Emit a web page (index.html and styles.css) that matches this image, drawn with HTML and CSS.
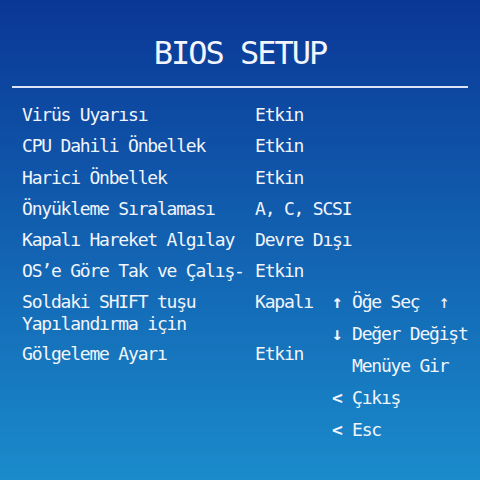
FILE: index.html
```html
<!DOCTYPE html>
<html lang="tr">
<head>
  <meta charset="UTF-8">
  <title>BIOS SETUP</title>
  <meta name="viewport" content="width=device-width, initial-scale=1.0">
  <link rel="stylesheet" href="styles.css">
</head>
<body>
  <div class="screen">
    <h1 class="title">BIOS SETUP</h1>
    <hr class="rule">

    <div class="options">
      <div class="label">Virüs Uyarısı</div><div class="value">Etkin</div>
      <div class="label">CPU Dahili Önbellek</div><div class="value">Etkin</div>
      <div class="label">Harici Önbellek</div><div class="value">Etkin</div>
      <div class="label">Önyükleme Sıralaması</div><div class="value">A, C, SCSI</div>
      <div class="label">Kapalı Hareket Algılay</div><div class="value">Devre Dışı</div>
      <div class="label">OS’e Göre Tak ve Çalış-</div><div class="value">Etkin</div>
    </div>

    <div class="lower">
      <div class="options lower-opts">
        <div class="label">Soldaki SHIFT tuşu<br>Yapılandırma için</div><div class="value">Kapalı</div>
        <div class="label">Gölgeleme Ayarı</div><div class="value">Etkin</div>
      </div>
      <div class="help">
        <div class="key">↑</div><div class="act">Öğe Seç  ↑</div>
        <div class="key">↓</div><div class="act">Değer Değişt</div>
        <div class="key"></div><div class="act">Menüye Gir</div>
        <div class="key">&lt;</div><div class="act">Çıkış</div>
        <div class="key">&lt;</div><div class="act">Esc</div>
      </div>
    </div>
  </div>
</body>
</html>
```

FILE: styles.css
```css
html, body {
  margin: 0;
  height: 100%;
}
body {
  font-family: 'DejaVu Sans Mono', 'Liberation Mono', monospace;
  background: linear-gradient(to bottom, #0a3796, #1a8bcb);
  color: #f2f5fc;
}
.screen {
  padding: 33px 12px 0;
}
.title {
  margin: 0;
  font-size: 32px;
  font-weight: normal;
  line-height: 40px;
  letter-spacing: -2px;
  text-align: center;
}
.rule {
  margin: 13px 0 0;
  height: 2px;
  border: none;
  background: #dbe4f5;
}
.options {
  display: grid;
  grid-template-columns: 233px 1fr;
  row-gap: 9.3px;
  margin: 16px 0 0 10px;
  font-size: 18px;
  line-height: 22px;
  letter-spacing: -1.2px;
}
.lower {
  display: flex;
  margin-top: 9px;
}
.lower-opts {
  width: 310px;
  grid-template-columns: 233px 77px;
  align-content: start;
  row-gap: 8px;
  margin-top: 0;
}
.help {
  display: grid;
  grid-template-columns: 20px auto;
  row-gap: 9.8px;
  font-size: 18px;
  line-height: 22px;
  letter-spacing: -1.2px;
  white-space: pre;
}
.key {
  font-size: 18px;
  font-weight: bold;
}
```
